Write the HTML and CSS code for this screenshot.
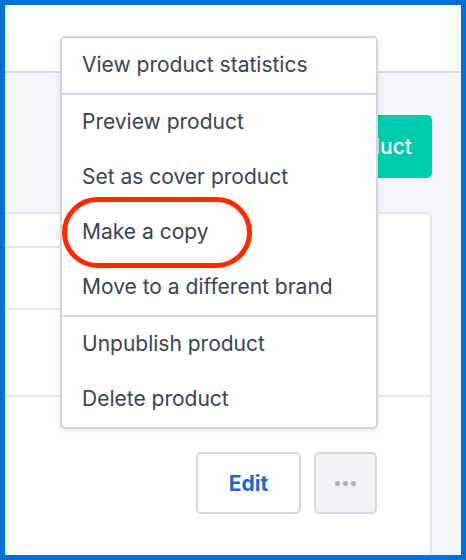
FILE: index.html
```html
<!DOCTYPE html>
<html lang="en">
<head>
<meta charset="utf-8">
<title>Product actions</title>
<link rel="stylesheet" href="styles.css">
</head>
<body>
<div class="frame">
  <header class="topbar"></header>
  <main class="content">
    <div class="toolbar">
      <button class="btn-primary">Add product</button>
    </div>
    <section class="card">
      <div class="summary">
        <div class="fields">
          <div class="field field-head"></div>
          <div class="field field-mid"></div>
          <div class="field field-last"></div>
        </div>
      </div>
      <div class="actions">
        <button class="btn-edit">Edit</button>
        <button class="btn-more" aria-label="More actions"><span class="dot"></span><span class="dot"></span><span class="dot"></span></button>
      </div>
    </section>
  </main>
  <nav class="menu">
    <ul class="menu-group">
      <li class="menu-item">View product statistics</li>
    </ul>
    <ul class="menu-group">
      <li class="menu-item">Preview product</li>
      <li class="menu-item">Set as cover product</li>
      <li class="menu-item">Make a copy</li>
      <li class="menu-item">Move to a different brand</li>
    </ul>
    <ul class="menu-group">
      <li class="menu-item">Unpublish product</li>
      <li class="menu-item">Delete product</li>
    </ul>
  </nav>
  <div class="highlight"></div>
</div>
</body>
</html>
```

FILE: styles.css
```css
* {
  box-sizing: border-box;
}

html, body {
  margin: 0;
  padding: 0;
  background: #ffffff;
}

body {
  font-family: Inter, "Liberation Sans", sans-serif;
  color: #394356;
}

.frame {
  position: relative;
  width: 466px;
  height: 560px;
  border: 5px solid #0070d7;
  overflow: hidden;
  background: #f6f7fa;
  display: flex;
  flex-direction: column;
}

.topbar {
  height: 68px;
  flex: none;
  background: #ffffff;
  border-bottom: 2px solid #d6d9e0;
}

.content {
  flex: 1;
  display: flex;
  flex-direction: column;
  padding: 42px 29px 0 0;
}

.toolbar {
  display: flex;
  justify-content: flex-end;
}

.btn-primary {
  height: 63px;
  padding: 0 20px;
  border: 0;
  border-radius: 5px;
  background: #00ccad;
  color: #ffffff;
  font-family: inherit;
  font-size: 21px;
  font-weight: 500;
}

.card {
  flex: 1;
  margin-top: 34px;
  background: #ffffff;
  border: 2px solid #e3e6eb;
  border-left: 0;
  border-bottom: 0;
  border-radius: 0 6px 0 0;
}

.summary {
  border-bottom: 2px solid #e3e6eb;
}

.fields {
  width: 240px;
}

.field {
  border-bottom: 2px solid #e3e6eb;
}

.field-head {
  height: 34px;
}

.field-mid {
  height: 62px;
}

.field-last {
  height: 85px;
  border-bottom: 0;
}

.actions {
  display: flex;
  justify-content: flex-end;
  gap: 13px;
  padding: 55px 53px 0 0;
}

.btn-edit,
.btn-more {
  height: 62px;
  border: 2px solid #d3d7df;
  border-radius: 5px;
  font-family: inherit;
}

.btn-edit {
  width: 105px;
  background: #ffffff;
  color: #1769d1;
  font-size: 21px;
  font-weight: 700;
}

.btn-more {
  width: 63px;
  background: #f1f2f6;
  display: flex;
  align-items: center;
  justify-content: center;
  gap: 3px;
  padding: 0;
}

.dot {
  width: 5px;
  height: 5px;
  border-radius: 50%;
  background: #a9afbc;
}

.menu {
  position: absolute;
  left: 55px;
  top: 31px;
  width: 318px;
  background: #ffffff;
  border: 2px solid #d1d5dd;
  border-radius: 5px;
  box-shadow: 0 2px 6px rgba(40, 50, 70, 0.1);
}

.menu-group {
  list-style: none;
  margin: 0;
  padding: 0;
}

.menu-group + .menu-group {
  border-top: 2px solid #d5d8e0;
}

.menu-item {
  height: 55px;
  display: flex;
  align-items: center;
  padding-left: 20px;
  padding-bottom: 2px;
  font-size: 21px;
  white-space: nowrap;
}

.highlight {
  position: absolute;
  left: 57px;
  top: 192px;
  width: 190px;
  height: 71px;
  border: 5px solid #ff2a00;
  border-radius: 36px;
}
```
